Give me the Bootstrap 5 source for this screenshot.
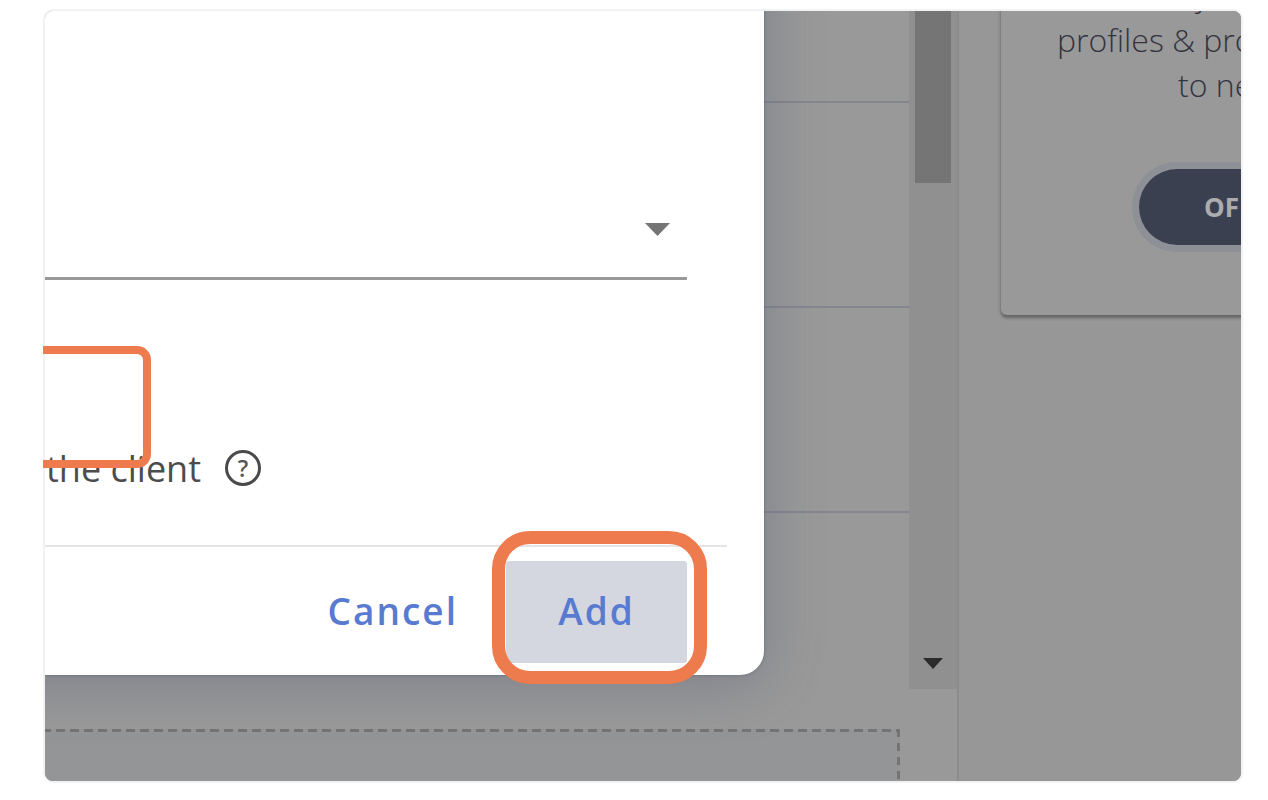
<!DOCTYPE html>
<html lang="en">
<head>
<meta charset="utf-8">
<meta name="viewport" content="width=device-width, initial-scale=1">
<title>Add client</title>
<link href="https://cdn.jsdelivr.net/npm/bootstrap@5.3.0/dist/css/bootstrap.min.css" rel="stylesheet">
<style>
  body { background: #fff; font-family: "Open Sans", "Noto Sans", sans-serif; }
  .stage { margin: 9px 25px 17px 43px; }
  .shot { border: 2px solid #f2f2f4; border-radius: 10px; background: #999; }
  .scroller { flex: 1 1 auto; }
  .list-line { border-bottom: 2px solid #84868f; height: 205px; }
  .list-line.first { height: 92px; }
  .list-line.last { height: 176px; border: 0; }
  .track { width: 48px; background: #909090; }
  .thumb { width: 36px; height: 172px; background: #757575; }
  .dropzone {
    height: 52px; margin: 40px 57px 0 0;
    background:
      repeating-linear-gradient(90deg, #747474 0 6px, transparent 6px 11px, #747474 11px 14px) 0 0 / 100% 3px no-repeat,
      repeating-linear-gradient(180deg, #747474 0 8px, transparent 8px 14px) 100% 0 / 3px 100% no-repeat,
      #939597;
  }
  .side { width: 284px; background: #979797; border-left: 2px solid #8c8c8c; }
  .promo {
    margin: -39px -60px 0 42px; padding-bottom: 70px; border-radius: 6px; background: #999;
    box-shadow: 0 3px 3px #666, 0 0 5px #808080;
    font: 300 32px/45px "Open Sans", sans-serif; color: #33333f;
  }
  .promo p { margin: 0; white-space: nowrap; }
  .promo .l0 { padding-left: 194px; }
  .promo .l1 { padding-left: 56px; }
  .promo .l2 { padding-left: 177px; }
  .pill {
    display: block; margin: 62px 0 0 138px; width: 200px; height: 76px; padding: 0 0 0 65px; border: 0;
    border-radius: 38px; background: #3b4051; box-shadow: 0 0 0 7px #8e9097;
    color: #acacae; font: 700 26px/76px "Open Sans", sans-serif; text-align: left;
  }
  .dialog-box {
    top: -80px; left: -80px; right: 477px; padding: 80px 0 0 80px; background: #fff; border-radius: 24px;
    box-shadow: 0 8px 56px rgba(84, 94, 116, .42), 0 0 3px rgba(70, 84, 112, .6);
  }
  .dialog-top { padding: 166px 77px 0 0; }
  .picker {
    appearance: none; display: block; width: 100%; height: 103px; border: 0; border-radius: 0;
    border-bottom: 3px solid #999; background: transparent;
  }
  .picker-arrow { right: 17px; bottom: 44px; }
  .help-row { margin-top: 164px; height: 101px; color: #4c4c4c; font-size: 36px; line-height: 50px; padding-left: 1px; }
  .help-btn {
    width: 36px; height: 36px; margin: 6px 0 0 24px; border: 3px solid #4a4a4a; border-radius: 50%; background: none;
    padding: 0; color: #555; font: 600 23px/28px "Open Sans", sans-serif;
  }
  .dialog-foot { margin-right: 37px; border-top: 2px solid #e5e5e6; padding: 14px 40px 12px 0; }
  .action {
    border: 0; background: transparent; height: 102px; padding: 0 0 2px; color: #587bd1;
    font: 600 37px/100px "Open Sans", sans-serif; letter-spacing: 2px;
  }
  .action.primary { width: 181px; background: #d4d7df; border-radius: 3px; }
  .ring { inset: -30px -20px -21px -14px; border: 13px solid #ee7b4d; border-radius: 38px; pointer-events: none; }
  .mark-box {
    left: 0; top: 337px; width: 108px; height: 122px; border: 8px solid #ee7b4d; border-left: 0;
    border-radius: 0 14px 14px 0; pointer-events: none;
  }
</style>
</head>
<body>
<div class="stage position-relative">
  <div class="shot position-relative overflow-hidden d-flex">
    <main class="flex-grow-1">
      <div class="d-flex">
        <div class="scroller">
          <div class="list-line first"></div>
          <div class="list-line"></div>
          <div class="list-line"></div>
          <div class="list-line last"></div>
        </div>
        <div class="track d-flex flex-column align-items-center justify-content-between">
          <div class="thumb"></div>
          <svg class="mb-3" width="20" height="16" viewBox="0 0 20 16" aria-hidden="true"><path d="M0 1H20L10 12Z" fill="#2b2b2b"/></svg>
        </div>
      </div>
      <div class="dropzone"></div>
    </main>
    <aside class="side flex-shrink-0">
      <div class="promo">
        <p class="l0">y</p>
        <p class="l1">profiles &amp; pro</p>
        <p class="l2">to ne</p>
        <button class="pill" type="button">OFF</button>
      </div>
    </aside>
    <section class="dialog-box position-absolute" role="dialog" aria-label="Add">
      <div class="dialog-top">
        <div class="position-relative">
          <select class="picker" aria-label="Client"><option></option></select>
          <svg class="picker-arrow position-absolute pe-none" width="25" height="13" viewBox="0 0 25 13" aria-hidden="true"><path d="M0 0H25L12.500 13Z" fill="#757575"/></svg>
        </div>
        <div class="help-row d-flex align-items-start">
          <span>the client</span>
          <button class="help-btn" type="button">?</button>
        </div>
      </div>
      <div class="dialog-foot d-flex justify-content-end">
        <button class="action me-5" type="button">Cancel</button>
        <div class="position-relative">
          <button class="action primary" type="button">Add</button>
          <div class="ring position-absolute"></div>
        </div>
      </div>
    </section>
  </div>
  <div class="mark-box position-absolute"></div>
</div>
<script src="https://cdn.jsdelivr.net/npm/bootstrap@5.3.0/dist/js/bootstrap.bundle.min.js"></script>
</body>
</html>
